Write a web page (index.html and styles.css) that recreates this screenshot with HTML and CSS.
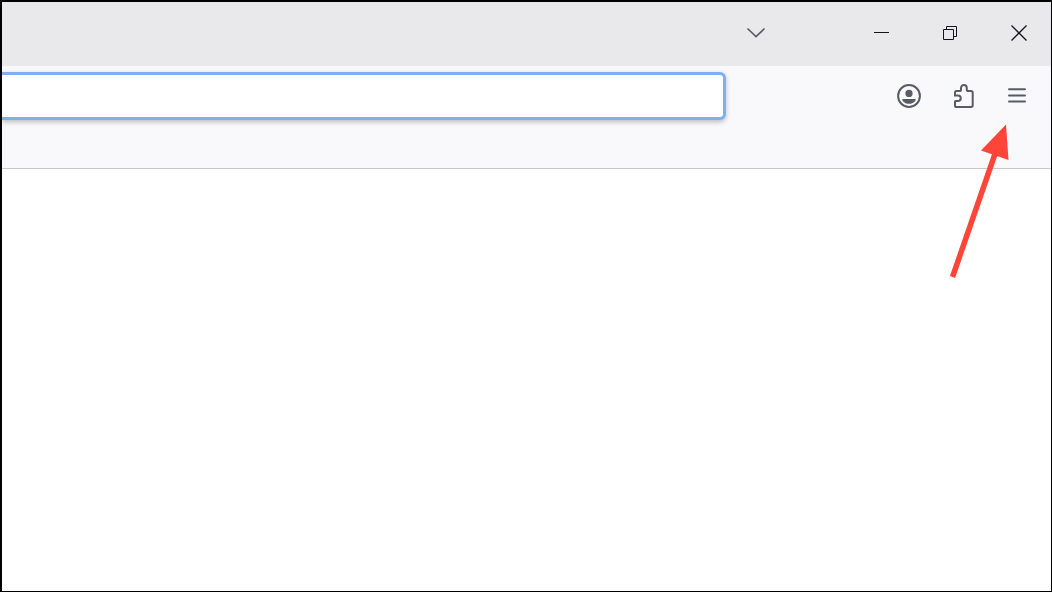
FILE: index.html
```html
<!DOCTYPE html>
<html lang="en">
  <head>
    <meta charset="UTF-8">
    <meta name="viewport" content="width=device-width, initial-scale=1.0">
    <title>Browser</title>
    <link rel="stylesheet" href="styles.css">
  </head>
  <body>
    <div class="browser">
      <header class="titlebar">
        <button class="window-button list-tabs" type="button" aria-label="List all tabs">
          <svg width="20" height="20" viewBox="0 0 20 20"><path d="M1.5 4.5L10 12.500L18.5 4.5" stroke-width="1.7"/></svg>
        </button>
        <button class="window-button" type="button" aria-label="Minimize">
          <svg width="20" height="20" viewBox="0 0 20 20"><path d="M3 8.5H18"/></svg>
        </button>
        <button class="window-button" type="button" aria-label="Restore">
          <svg width="20" height="20" viewBox="0 0 20 20"><path d="M3.5 5.5H13.5V15.5H3.5ZM6.5 5.5V2.5H16.5V12.5H13.5"/></svg>
        </button>
        <button class="window-button" type="button" aria-label="Close">
          <svg width="20" height="20" viewBox="0 0 20 20"><path d="M2.5 1.5L17.5 16.5M17.5 1.5L2.5 16.5" stroke-width="1.3"/></svg>
        </button>
      </header>

      <nav class="toolbar">
        <input class="urlbar" type="text" aria-label="Search or enter address">
        <div class="toolbar-buttons">
          <button class="toolbar-button" type="button" aria-label="Account">
            <svg width="24" height="24" viewBox="0 0 24 24">
              <circle cx="12" cy="12" r="10.9"/>
              <circle class="solid" cx="12" cy="9.4" r="3.6"/>
              <path class="solid" d="M6.2 15H17.8C18.7 15 19 15.7 18.5 16.4C17 18.6 14.7 19.8 12 19.8S7 18.6 5.5 16.4C5 15.7 5.3 15 6.2 15Z"/>
            </svg>
          </button>
          <button class="toolbar-button" type="button" aria-label="Extensions">
            <svg width="24" height="24" viewBox="0 0 24 24">
              <path d="M4 11.5V8.5Q4 7 5.5 7H9.2Q10 7 10 6.2V4A2.9 2.9 0 0 1 15.8 4V6.2Q15.8 7 16.6 7H20Q21.7 7 21.7 8.7V21.3Q21.7 23 20 23H5.6Q4 23 4 21.4V17.6Q4 17 4.6 17H7A2.7 2.7 0 0 0 7 11.5Z"/>
            </svg>
          </button>
          <button class="toolbar-button" type="button" aria-label="Open application menu">
            <svg width="24" height="24" viewBox="0 0 24 24"><path d="M4 5.3H20M4 11.5H20M4 17.6H20" stroke-linecap="round"/></svg>
          </button>
        </div>
      </nav>

      <main class="content"></main>

      <svg class="arrow" width="80" height="160" viewBox="0 0 80 160" aria-hidden="true">
        <path class="arrow-line" d="M10.5 157L53 34"/>
        <path class="arrow-head" d="M64 4.5L39 30.5L66.5 40Z"/>
      </svg>
    </div>
  </body>
</html>
```
FILE: styles.css
```css
* {
  box-sizing: border-box;
}

body {
  margin: 0;
  font-family: "Liberation Sans", Arial, sans-serif;
}

button {
  display: flex;
  align-items: center;
  justify-content: center;
  padding: 0;
  border: 0;
  background: none;
}

svg {
  fill: none;
  stroke: currentColor;
}

.browser {
  position: relative;
  display: flex;
  flex-direction: column;
  min-height: 100vh;
  border: 1px solid #000;
  border-top-width: 2px;
  border-left-width: 2px;
  background: #fff;
}

.titlebar {
  display: flex;
  justify-content: flex-end;
  gap: 5px;
  background: #e9e9eb;
}

.window-button {
  width: 64px;
  height: 64px;
  color: #15141a;
}

.list-tabs {
  margin-right: 56px;
  color: #5b5b66;
}

.toolbar {
  display: flex;
  gap: 159px;
  padding: 6px 10px 48px 0;
  border-bottom: 1px solid #c9c9cc;
  background: #f9f9fb;
}

.urlbar {
  flex: 1;
  min-width: 0;
  height: 48px;
  padding: 0 16px;
  border: 3px solid #7eb0ee;
  border-left: 0;
  border-radius: 0 6px 6px 0;
  outline: 0;
  background: #fff;
  box-shadow: 0 2px 5px rgba(0, 0, 0, 0.25);
  font: inherit;
  font-size: 20px;
}

.toolbar-buttons {
  display: flex;
  gap: 6px;
}

.toolbar-button {
  width: 48px;
  height: 48px;
  color: #5b5b66;
  stroke-width: 2px;
}

.solid {
  fill: currentColor;
  stroke: none;
}

.content {
  flex: 1;
}

/* points at the menu button */
.arrow {
  position: absolute;
  top: 118px;
  right: 29px;
}

.arrow-line {
  stroke: #ff4539;
  stroke-width: 5.5px;
}

.arrow-head {
  fill: #ff4539;
  stroke: none;
}
```
